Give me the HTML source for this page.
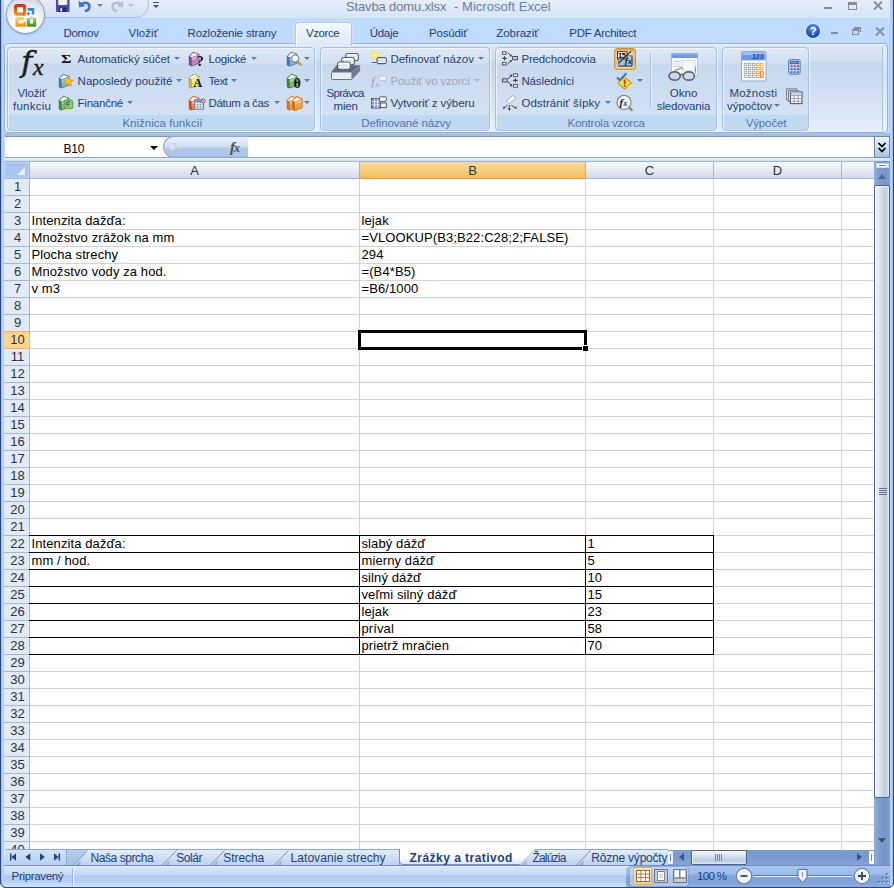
<!DOCTYPE html><html><head><meta charset="utf-8"><title>Stavba domu.xlsx - Microsoft Excel</title><style>

html,body{margin:0;padding:0}
body{width:894px;height:888px;position:relative;overflow:hidden;background:#bfdbff;font-family:"Liberation Sans",sans-serif;font-size:12px;color:#15428b}
.a{position:absolute}
.t{position:absolute;white-space:nowrap;font-family:"Liberation Sans",sans-serif}
.c{position:absolute;white-space:nowrap;font-family:"Liberation Sans",sans-serif;font-size:13px;line-height:16px;color:#000;letter-spacing:.1px}
.rh{position:absolute;left:4px;width:23px;padding-left:2px;text-align:center;font-family:"Liberation Sans",sans-serif;font-size:13px;line-height:16px;color:#2a3340;height:16px;background:#e2eaf6;border-bottom:1px solid #a5b6cf}
.ch{position:absolute;top:162px;height:16px;text-align:center;font-family:"Liberation Sans",sans-serif;font-size:13px;line-height:17px;color:#2a3340;background:linear-gradient(#f9fcfd,#d3dbe9);border-right:1px solid #9eb6ce;border-bottom:1px solid #9eb6ce;box-sizing:content-box}
.grp{position:absolute;top:47px;height:82px;border:1px solid #a3c0e3;border-radius:4px;background:linear-gradient(#dfe9f6 0px,#d3e0f1 15px,#c8d9ed 16px,#d3e2f3 67px,#c1d8f1 67px,#c3daf3 82px);box-shadow:1px 1px 0 rgba(255,255,255,.65), inset 1px 1px 0 rgba(255,255,255,.6)}
.dd{position:absolute;width:0;height:0;border-left:3px solid transparent;border-right:3px solid transparent;border-top:3px solid #567db1}
.stab{position:absolute;top:850px;height:15px}

</style></head><body>
<div class="a" style="left:0;top:0;width:894px;height:18px;background:linear-gradient(#e6eefa,#d5e4f7)"></div>
<div class="a" style="left:30px;top:-10px;width:117px;height:26px;border:1px solid #a4bfe2;border-radius:0 13px 13px 0;background:linear-gradient(#eef3fb,#d3e1f4)"></div>
<svg class="a" style="left:56px;top:0px" width="14" height="13" viewBox="0 0 14 13"><rect x="0" y="-2" width="13.5" height="14" rx="1" fill="#4b4aa8"/><rect x="2.2" y="-2" width="9" height="7" fill="#f4f6fb"/><rect x="3" y="7.4" width="7.4" height="4.6" fill="#2a2a6a"/><rect x="4.2" y="8.2" width="2" height="3.2" fill="#dfe3f2"/></svg>
<svg class="a" style="left:78px;top:0px" width="14" height="12" viewBox="0 0 14 12"><path d="M3.2 4.6c3.6 -3.4 8.6 -1.6 8.2 2.4c-.3 2.6 -2.6 3.8 -4.6 4" fill="none" stroke="#3f74d1" stroke-width="2.6"/><polygon points="0.6,0.4 1,7.4 7.4,6" fill="#3f74d1"/></svg>
<div class="dd" style="left:97px;top:4px;border-top-color:#6f7f96"></div>
<svg class="a" style="left:110px;top:0px" width="14" height="12" viewBox="0 0 14 12"><path d="M10.8 4.6c-3.6 -3.4 -8.6 -1.6 -8.2 2.4c.3 2.6 2.6 3.8 4.6 4" fill="none" stroke="#b4bfd0" stroke-width="2.6"/><polygon points="13.4,0.4 13,7.4 6.6,6" fill="#b4bfd0"/></svg>
<div class="dd" style="left:128px;top:4px;border-top-color:#b4bfd0"></div>
<div class="a" style="left:153px;top:2px;width:6px;height:1px;background:#3b4f74"></div>
<div class="dd" style="left:153px;top:5px;border-top-color:#3b4f74"></div>
<div class="a" style="left:7px;top:-4px;width:37px;height:37px;border-radius:50%;background:radial-gradient(circle at 50% 78%,#ffffff 0%,#fbfbfd 35%,#e6e9f0 60%,#cfd5e2 80%,#b9c1d3 100%);box-shadow:0 0 0 1px #97a3ba, 0 1px 3px rgba(60,80,120,.6)"></div>
<svg class="a" style="left:12px;top:2px" width="26" height="26" viewBox="0 0 26 26">
<defs><linearGradient id="o1" x1="0" y1="0" x2="0" y2="1"><stop offset="0" stop-color="#c9370c"/><stop offset="1" stop-color="#f0901e"/></linearGradient>
<linearGradient id="o2" x1="0" y1="0" x2="0" y2="1"><stop offset="0" stop-color="#f7d75a"/><stop offset="1" stop-color="#f49a12"/></linearGradient>
<linearGradient id="o3" x1="0" y1="0" x2="0" y2="1"><stop offset="0" stop-color="#9fcf6a"/><stop offset="1" stop-color="#4f9428"/></linearGradient></defs>
<rect x="3.6" y="3.6" width="9" height="8.6" rx="1.6" fill="none" stroke="url(#o1)" stroke-width="3.2"/>
<path d="M15.6 7.4h5.4v5.2" fill="none" stroke="#3f86cf" stroke-width="2.6"/><rect x="15" y="10.4" width="2.6" height="2.6" transform="rotate(45 16.3 11.7)" fill="#3f86cf"/>
<rect x="10.6" y="11" width="2.4" height="2.4" transform="rotate(45 11.8 12.2)" fill="#e06a1a"/>
<path d="M11.8 16.6h-6.800v6.600h7.600v-3.200" fill="none" stroke="url(#o2)" stroke-width="3.2"/>
<path d="M16.4 16v7.200h6.200v-7.200" fill="none" stroke="url(#o3)" stroke-width="3.2"/><rect x="18.2" y="14.600" width="2.6" height="2.6" fill="#b5db84"/>
</svg>
<div class="a" style="left:824px;top:7px;width:8px;height:2px;background:#858d9a"></div>
<div class="a" style="left:848px;top:2px;width:9px;height:8px;box-sizing:border-box;border:1px solid #858d9a;border-top-width:3px"></div>
<svg class="a" style="left:873px;top:1px" width="10" height="9" viewBox="0 0 10 9"><path d="M1 0.5l8 8M9 0.5l-8 8" stroke="#858d9a" stroke-width="1.900"/></svg>
<div class="a" style="left:806px;top:24px;width:14px;height:14px;border-radius:50%;background:radial-gradient(circle at 50% 30%,#6f9cf0,#1f4fc4 60%,#123a9c);box-shadow:0 0 0 1px #dfe9fb"></div>
<span class="a" style="left:806px;top:24px;width:14px;text-align:center;font:bold 11px/14px 'Liberation Sans',sans-serif;color:#fff">?</span>
<div class="a" style="left:831px;top:32px;width:7px;height:2px;background:#858d9a"></div>
<div class="a" style="left:854px;top:27px;width:7px;height:5px;box-sizing:border-box;border:1px solid #858d9a;border-top-width:2px"></div>
<div class="a" style="left:852px;top:29px;width:7px;height:6px;box-sizing:border-box;border:1px solid #858d9a;border-top-width:2px;background:#bfdbff"></div>
<svg class="a" style="left:875px;top:27px" width="10" height="9" viewBox="0 0 10 9"><path d="M1 0.5l8 8M9 0.5l-8 8" stroke="#858d9a" stroke-width="1.900"/></svg>
<div class="a" style="left:4px;top:43px;width:884px;height:90px;box-sizing:border-box;border:1px solid #8db2e3;border-radius:4px;background:linear-gradient(#dde7f5 0,#d1dff0 17px,#c6d7ec 18px,#cfdef1 45px,#e4effb 88px);box-shadow:inset 1px 1px 0 rgba(255,255,255,.6)"></div>
<div class="a" style="left:882px;top:47px;width:5px;height:84px;box-sizing:border-box;border-left:1px solid #a9c3e4;border-radius:0 3px 3px 0;background:linear-gradient(#e4eefa,#d3e2f4 30%,#eaf3fd)"></div>
<div class="a" style="left:295px;top:22px;width:55px;height:23px;border:1px solid #a9c6ec;border-bottom:none;border-radius:4px 4px 0 0;background:linear-gradient(#f4f8fe,#e6eef9 60%,#dfe9f6);box-shadow:inset 1px 1px 0 #fff,0 0 3px rgba(235,243,255,.9)"></div>
<div class="grp" style="left:7px;width:306px"></div>
<div class="grp" style="left:320px;width:168px"></div>
<div class="grp" style="left:495px;width:220px"></div>
<div class="grp" style="left:722px;width:85px"></div>
<div class="dd" style="left:174px;top:57px"></div>
<div class="dd" style="left:176px;top:79px"></div>
<div class="dd" style="left:127px;top:101px"></div>
<div class="dd" style="left:251px;top:57px"></div>
<div class="dd" style="left:231px;top:79px"></div>
<div class="dd" style="left:274px;top:101px"></div>
<div class="dd" style="left:304px;top:57px"></div>
<div class="dd" style="left:304px;top:79px"></div>
<div class="dd" style="left:304px;top:101px"></div>
<div class="dd" style="left:478px;top:57px"></div>
<div class="dd" style="left:605px;top:101px"></div>
<div class="dd" style="left:637px;top:79px"></div>
<div class="dd" style="left:774px;top:104px"></div>
<div class="dd" style="left:474px;top:79px;border-top-color:#a9b6c9"></div>
<span class="a" style="left:21.3px;top:47px;font-family:'DejaVu Serif','Liberation Serif',serif;font-style:italic;font-size:30px;line-height:1;color:#1c1c1c;-webkit-text-stroke:.5px #1c1c1c">f</span>
<span class="a" style="left:33px;top:55px;font-family:'Liberation Serif',serif;font-style:italic;font-size:24px;line-height:1;color:#1c1c1c;-webkit-text-stroke:.4px #1c1c1c">x</span>
<span class="a" style="left:60.5px;top:50px;font-family:'Liberation Serif',serif;font-weight:bold;font-size:13.5px;line-height:17px;color:#111;transform:scaleX(1.18);transform-origin:0 0">Σ</span>
<div class="a" style="left:650px;top:53px;width:1px;height:55px;background:#a9bfdd"></div><div class="a" style="left:651px;top:53px;width:1px;height:55px;background:#eaf1fa"></div>
<svg class="a" style="left:58px;top:73px" width="16" height="16" viewBox="0 0 16 16"><polygon points="0.8,5.2 5.2,0.7 11.4,3 11.4,12.5 3.4,15.5 0.8,13.9" fill="#2f6f9c"/><polygon points="1.5,5.4 5.3,1.6 10.7,3.5 3.5,6.3" fill="#c9e6f5"/><polygon points="2.6,5.5 5.4,2.6 9.6,4 3.8,6.1" fill="#fdfdf8"/><polygon points="1.5,5.9 3,6.600 3,14.600 1.5,13.600" fill="#3f86b4"/><polygon points="3.7,6.800 10.700,4.200 10.700,12 3.700,14.700" fill="#7db7d8"/><polygon points="3.7,6.800 10.700,4.200 10.700,6.500 3.700,9.400" fill="#c9e6f5" opacity=".6"/><polygon points="10.2,3.6 11.6,7 15.3,7.2 12.5,9.5 13.5,13 10.2,11 7,13 8,9.5 5.2,7.2 8.8,7" fill="#fbc21a" stroke="#e08a10" stroke-width=".7"/></svg>
<svg class="a" style="left:58px;top:95px" width="16" height="16" viewBox="0 0 16 16"><polygon points="0.8,5.2 5.2,0.7 11.4,3 11.4,12.5 3.4,15.5 0.8,13.9" fill="#2f7a38"/><polygon points="1.5,5.4 5.3,1.6 10.7,3.5 3.5,6.3" fill="#c9ecc5"/><polygon points="2.6,5.5 5.4,2.6 9.6,4 3.8,6.1" fill="#fdfdf8"/><polygon points="1.5,5.9 3,6.600 3,14.600 1.5,13.600" fill="#3f8f45"/><polygon points="3.7,6.800 10.700,4.200 10.700,12 3.700,14.700" fill="#7fbf7a"/><polygon points="3.7,6.800 10.700,4.200 10.700,6.500 3.700,9.400" fill="#c9ecc5" opacity=".6"/><rect x="6.2" y="5.2" width="8.6" height="8.4" rx="1.5" fill="#8fca86" stroke="#3f8f45" stroke-width=".8"/><path d="M12.3 7.2h-2.6a1.2 1.2 0 0 0 0 2.4h1.4" fill="none" stroke="#2f6f38" stroke-width="1.3"/><ellipse cx="9.8" cy="12.4" rx="2.6" ry="1" fill="#e8b93a" stroke="#a8791a" stroke-width=".5"/></svg>
<svg class="a" style="left:188px;top:51px" width="17" height="17" viewBox="0 0 17 17"><polygon points="0.8,5.2 5.2,0.7 11.4,3 11.4,12.5 3.4,15.5 0.8,13.9" fill="#74407f"/><polygon points="1.5,5.4 5.3,1.6 10.7,3.5 3.5,6.3" fill="#ebc9ee"/><polygon points="2.6,5.5 5.4,2.6 9.6,4 3.8,6.1" fill="#fdfdf8"/><polygon points="1.5,5.9 3,6.600 3,14.600 1.5,13.600" fill="#8a4a96"/><polygon points="3.7,6.800 10.700,4.200 10.700,12 3.700,14.700" fill="#c084c4"/><polygon points="3.7,6.800 10.700,4.200 10.700,6.500 3.700,9.400" fill="#ebc9ee" opacity=".6"/><text x="12" y="15.300" font-family="Liberation Serif,serif" font-weight="bold" font-size="14.500" text-anchor="middle" fill="#111">?</text></svg>
<svg class="a" style="left:188px;top:73px" width="16" height="16" viewBox="0 0 16 16"><polygon points="0.8,5.2 5.2,0.7 11.4,3 11.4,12.5 3.4,15.5 0.8,13.9" fill="#a8962a"/><polygon points="1.5,5.4 5.3,1.6 10.7,3.5 3.5,6.3" fill="#fdf8c3"/><polygon points="2.6,5.5 5.4,2.6 9.6,4 3.8,6.1" fill="#fdfdf8"/><polygon points="1.5,5.9 3,6.600 3,14.600 1.5,13.600" fill="#cdb93a"/><polygon points="3.7,6.800 10.700,4.200 10.700,12 3.700,14.700" fill="#f3e36e"/><polygon points="3.7,6.800 10.700,4.200 10.700,6.500 3.700,9.400" fill="#fdf8c3" opacity=".6"/><text x="9.700" y="13.900" font-family="Liberation Serif,serif" font-weight="bold" font-size="12.500" text-anchor="middle" fill="#111">A</text></svg>
<svg class="a" style="left:188px;top:95px" width="18" height="16" viewBox="0 0 18 16"><polygon points="0.8,5.2 5.2,0.7 11.4,3 11.4,12.5 3.4,15.5 0.8,13.9" fill="#b8481a"/><polygon points="1.5,5.4 5.3,1.6 10.7,3.5 3.5,6.3" fill="#fbd0b4"/><polygon points="2.6,5.5 5.4,2.6 9.6,4 3.8,6.1" fill="#fdfdf8"/><polygon points="1.5,5.9 3,6.600 3,14.600 1.5,13.600" fill="#cf5420"/><polygon points="3.7,6.800 10.700,4.200 10.700,12 3.700,14.700" fill="#f08a52"/><polygon points="3.7,6.800 10.700,4.200 10.700,6.500 3.700,9.400" fill="#fbd0b4" opacity=".6"/><rect x="6.800" y="4.800" width="8.800" height="9.400" fill="#f4f6fb" stroke="#5a6f9c" stroke-width=".9"/><rect x="7.200" y="5.200" width="8" height="2.400" fill="#6f8fc9"/><path d="M7.300 9.800h7.800M7.300 12h7.800M9.600 7.600v6.400M12.400 7.600v6.400" stroke="#8a97b8" stroke-width=".7"/><circle cx="15.200" cy="5.800" r="2" fill="#fff" stroke="#5a3a3a" stroke-width=".8"/><circle cx="15.200" cy="5.800" r=".8" fill="#c33"/></svg>
<svg class="a" style="left:286px;top:51px" width="16" height="16" viewBox="0 0 16 16"><polygon points="0.8,5.2 5.2,0.7 11.4,3 11.4,12.5 3.4,15.5 0.8,13.9" fill="#3b689f"/><polygon points="1.5,5.4 5.3,1.6 10.7,3.5 3.5,6.3" fill="#d0e1f4"/><polygon points="2.6,5.5 5.4,2.6 9.6,4 3.8,6.1" fill="#fdfdf8"/><polygon points="1.5,5.9 3,6.600 3,14.600 1.5,13.600" fill="#4a78b4"/><polygon points="3.7,6.800 10.700,4.200 10.700,12 3.700,14.700" fill="#86add8"/><polygon points="3.7,6.800 10.700,4.200 10.700,6.500 3.700,9.400" fill="#d0e1f4" opacity=".6"/><circle cx="9.2" cy="7.6" r="3.6" fill="#eef5fc" stroke="#7f8ea3" stroke-width="1.2"/><path d="M11.8 10.4l3 3.4" stroke="#c8904a" stroke-width="2.2" stroke-linecap="round"/></svg>
<svg class="a" style="left:286px;top:73px" width="16" height="16" viewBox="0 0 16 16"><polygon points="0.8,5.2 5.2,0.7 11.4,3 11.4,12.5 3.4,15.5 0.8,13.9" fill="#2f7538"/><polygon points="1.5,5.4 5.3,1.6 10.7,3.5 3.5,6.3" fill="#c9e9c4"/><polygon points="2.6,5.5 5.4,2.6 9.6,4 3.8,6.1" fill="#fdfdf8"/><polygon points="1.5,5.9 3,6.600 3,14.600 1.5,13.600" fill="#3f8a45"/><polygon points="3.7,6.800 10.700,4.200 10.700,12 3.700,14.700" fill="#7fba78"/><polygon points="3.7,6.800 10.700,4.200 10.700,6.500 3.700,9.400" fill="#c9e9c4" opacity=".6"/><text x="11.2" y="14.6" font-family="Liberation Serif,serif" font-weight="bold" font-size="14" text-anchor="middle" fill="#111">θ</text></svg>
<svg class="a" style="left:286px;top:95px" width="17" height="16" viewBox="0 0 17 16"><polygon points="0.8,5.2 5.2,0.7 11.4,3 11.4,12.5 3.4,15.5 0.8,13.9" fill="#c46a15"/><polygon points="1.5,5.4 5.3,1.6 10.7,3.5 3.5,6.3" fill="#fcd7a8"/><polygon points="2.6,5.5 5.4,2.6 9.6,4 3.8,6.1" fill="#fdfdf8"/><polygon points="1.5,5.9 3,6.600 3,14.600 1.5,13.600" fill="#d9761a"/><polygon points="3.7,6.800 10.700,4.200 10.700,12 3.700,14.700" fill="#f6a04a"/><polygon points="3.7,6.800 10.700,4.200 10.700,6.500 3.700,9.400" fill="#fcd7a8" opacity=".6"/><g transform="translate(5.2,0.4)"><polygon points="0.8,5.2 5.2,0.7 11.4,3 11.4,12.5 3.4,15.5 0.8,13.9" fill="#c46a15"/><polygon points="1.5,5.4 5.3,1.6 10.7,3.5 3.5,6.3" fill="#fcd7a8"/><polygon points="2.6,5.5 5.4,2.6 9.6,4 3.8,6.1" fill="#fdfdf8"/><polygon points="1.5,5.9 3,6.600 3,14.600 1.5,13.600" fill="#d9761a"/><polygon points="3.7,6.800 10.700,4.200 10.700,12 3.700,14.700" fill="#f6a04a"/><polygon points="3.7,6.800 10.700,4.200 10.700,6.500 3.700,9.400" fill="#fcd7a8" opacity=".6"/></g></svg>
<svg class="a" style="left:331px;top:52px" width="31" height="29" viewBox="0 0 31 29"><polygon points="0.3,20 5.7,13.2 29.1,13.2 21,20" fill="#5f6b80"/><polygon points="21,20 29.1,13.2 29.1,19 21,27.5" fill="#717d92"/><rect x="14.7" y="1.5" width="12.6" height="7.2" rx="2" fill="#fbfcfe" stroke="#4f5a70" stroke-width="1.100"/><path d="M17.9 4.3h7M17.9 6.3h7" stroke="#c5cad6" stroke-width=".8"/><circle cx="16.5" cy="5.1" r=".6" fill="#6a758c"/><rect x="10.7" y="5.5" width="12.6" height="7.2" rx="2" fill="#fbfcfe" stroke="#4f5a70" stroke-width="1.100"/><path d="M13.899999999999999 8.3h7M13.899999999999999 10.3h7" stroke="#c5cad6" stroke-width=".8"/><circle cx="12.5" cy="9.1" r=".6" fill="#6a758c"/><rect x="6.6" y="10" width="12.6" height="7.2" rx="2" fill="#fbfcfe" stroke="#4f5a70" stroke-width="1.100"/><path d="M9.8 12.8h7M9.8 14.8h7" stroke="#c5cad6" stroke-width=".8"/><circle cx="8.4" cy="13.6" r=".6" fill="#6a758c"/><rect x="0.5" y="20" width="20.5" height="7.5" rx="1" fill="#e9edf6" stroke="#6a758c" stroke-width="1"/><polygon points="1,20 6,13.700 7,13.700 7,17 19,17.500 21,20" fill="#5f6b80" opacity="0"/></svg>
<svg class="a" style="left:371px;top:51px" width="16" height="14" viewBox="0 0 16 14"><rect x="0.8" y="0.8" width="6.6" height="6.6" fill="#ffe23a"/><path d="M4.1 0.5v7.4M0.4 4.1h7.4M1.4 1.4l5.4 5.4M6.8 1.4L1.4 6.8" stroke="#fff7b0" stroke-width=".8"/><path d="M0.6 11.5h5" stroke="#5f6b80" stroke-width="1"/><rect x="6" y="6.6" width="9.4" height="6" rx="1.8" fill="#fbfcfe" stroke="#4f5a70" stroke-width="1.1"/><path d="M9 8.8h5M9 10.6h5" stroke="#b9c0ce" stroke-width=".8"/><circle cx="7.7" cy="9.6" r=".6" fill="#4f5a70"/></svg>
<svg class="a" style="left:371px;top:74px" width="16" height="14" viewBox="0 0 16 14"><text x="0" y="12" font-family="Liberation Serif,serif" font-style="italic" font-size="13" fill="#9aa3b2">f</text><text x="4.6" y="12.6" font-family="Liberation Serif,serif" font-style="italic" font-size="9" fill="#9aa3b2">x</text><rect x="8" y="1.8" width="7.4" height="5" rx="1.5" fill="#eef1f7" stroke="#b4bccb" stroke-width="1"/></svg>
<svg class="a" style="left:371px;top:96px" width="16" height="13" viewBox="0 0 16 13"><rect x="0.5" y="2.5" width="9" height="9.5" fill="#8b93c9" stroke="#4a5388" stroke-width="1"/><path d="M0.5 5.6h9M0.5 8.8h9M3.6 2.5v9.5M6.6 2.5v9.5" stroke="#e8ebf8" stroke-width=".9"/><rect x="8.4" y="0.8" width="7" height="4.6" rx="1.4" fill="#fbfcfe" stroke="#4f5a70" stroke-width="1"/><rect x="9.6" y="7" width="5.8" height="4.6" fill="#fbfcfe" stroke="#4f5a70" stroke-width="1"/></svg>
<svg class="a" style="left:502px;top:51px" width="16" height="15" viewBox="0 0 16 15"><rect x="0.5" y="0.8" width="3.6" height="2.4" fill="#fff" stroke="#3c4250" stroke-width=".9"/><rect x="0.5" y="11.6" width="3.6" height="2.4" fill="#fff" stroke="#3c4250" stroke-width=".9"/><path d="M0.3 7.4h4.4M2.5 5.2v4.4" stroke="#3c4250" stroke-width="1.1"/><path d="M5.6 1.6l3.6 3.4M5.6 13l3.6 -3.4" stroke="#3c4250" stroke-width="1"/><path d="M9.8 5.6l-2.6 -.4 2.2 -2.2zM9.8 9l-2.6 .4 2.2 2.2z" fill="#3c4250"/><rect x="10.6" y="5.6" width="4.8" height="3.2" fill="#c9ccd3" stroke="#3c4250" stroke-width=".9"/></svg>
<svg class="a" style="left:502px;top:73px" width="16" height="15" viewBox="0 0 16 15"><rect x="0.5" y="5.8" width="4.8" height="3.2" fill="#c9ccd3" stroke="#3c4250" stroke-width=".9"/><path d="M5.8 6l4 -3.8M5.8 8.8l4 3.8" stroke="#3c4250" stroke-width="1"/><path d="M10.4 1.4l-2.8 .4 2.2 2.2zM10.4 13.4l-2.8 -.4 2.2 -2.2z" fill="#3c4250"/><rect x="11.6" y="0.8" width="3.8" height="2.6" fill="#fff" stroke="#3c4250" stroke-width=".9"/><rect x="11.6" y="11.6" width="3.8" height="2.6" fill="#fff" stroke="#3c4250" stroke-width=".9"/><path d="M11.2 7.4h4.4M13.4 5.2v4.4" stroke="#3c4250" stroke-width="1.1"/></svg>
<svg class="a" style="left:502px;top:94px" width="17" height="18" viewBox="0 0 17 18"><polygon points="4.4,7 10.8,1.4 14,3.8 7.6,9.6" fill="#fbfcfe" stroke="#9aa0ad" stroke-width=".9"/><polygon points="4.4,7 7.6,9.6 6.8,10.400 3.800,7.800" fill="#cfd3dc"/><path d="M7.300 11v4.600M5.300 11.200l-3.400 2.800M9.300 11.200l4.400 2.800" stroke="#3c4250" stroke-width="1"/><path d="M7.300 17l-1.600 -2.600h3.200zM0.800 14.800l.9 -2.600 1.700 2zM15 14.800l-.9 -2.600 -1.700 2z" fill="#3c4250"/></svg>
<div class="a" style="left:614px;top:48px;width:22px;height:22px;box-sizing:border-box;border:1px solid #c2934f;border-radius:3px;background:linear-gradient(#f7c27a,#fbd6a0 45%,#f9b95e 50%,#fbcf8a);box-shadow:inset 0 1px 2px rgba(150,90,20,.45)"></div>
<svg class="a" style="left:617px;top:51px" width="16" height="16" viewBox="0 0 16 16"><rect x="1.500" y="4.700" width="13.500" height="10.300" fill="#a9c3e6" stroke="#5f7fb0" stroke-width=".8"/><path d="M15 4.700v10.300h-13.500" fill="none" stroke="#2c4670" stroke-width="1"/><rect x="0.500" y="0.700" width="9.500" height="7.200" fill="#fff" stroke="#333" stroke-width="1"/><text x="1.100" y="7" font-family="Liberation Sans,sans-serif" font-weight="bold" font-size="7.500" fill="#000" letter-spacing="-.6">15</text><text x="7.800" y="12.800" font-family="Liberation Serif,serif" font-style="italic" font-weight="bold" font-size="8.500" fill="#111">fx</text><path d="M14.200 0.200L1.500 12.400" stroke="#222" stroke-width="1.100"/></svg>
<svg class="a" style="left:616px;top:72px" width="17" height="18" viewBox="0 0 17 18"><polygon points="8.6,4.6 15.4,11 8.6,17.4 1.8,11" fill="#fbd21f" stroke="#b98a10" stroke-width="1"/><polygon points="8.6,6.4 13.4,11 8.6,15.6 3.8,11" fill="#fde25a"/><path d="M8.6 7.6v4.6" stroke="#d92a1a" stroke-width="1.8"/><circle cx="8.6" cy="14" r="1" fill="#d92a1a"/><path d="M1 5.6l2.8 2.6 6.6 -7" fill="none" stroke="#3f74c4" stroke-width="2"/></svg>
<svg class="a" style="left:616px;top:94px" width="18" height="18" viewBox="0 0 18 18"><path d="M12.6 12.8l3 3" stroke="#a8864a" stroke-width="2.6" stroke-linecap="round"/><circle cx="8" cy="8.4" r="7" fill="#e9f0fa" stroke="#7d8ba3" stroke-width="1.3"/><circle cx="8" cy="8.4" r="5.6" fill="none" stroke="#fff" stroke-width=".8" opacity=".8"/><text x="3.4" y="12" font-family="Liberation Serif,serif" font-style="italic" font-weight="bold" font-size="11" fill="#222">f</text><text x="7.6" y="12.2" font-family="Liberation Serif,serif" font-style="italic" font-weight="bold" font-size="7.5" fill="#222">x</text></svg>
<svg class="a" style="left:668px;top:52px" width="31" height="30" viewBox="0 0 31 30"><rect x="3.5" y="1.5" width="26" height="22" fill="#fdfdfe" stroke="#b7c3d8" stroke-width="1"/><rect x="3.5" y="1.5" width="26" height="4.5" fill="#6d9be3"/><rect x="3.5" y="1.5" width="26" height="1.4" fill="#8db4ee"/><path d="M6 9.5h6.5M6 12h6.5M6 14.5h6.5M6 17h6.5" stroke="#b9c2d2" stroke-width=".9"/><rect x="14" y="8.5" width="13" height="10.5" fill="#f3f6fb" stroke="#c9d1df" stroke-width=".8"/><path d="M4.5 20.5l8.5 -5 2.5 1.5M27.5 14.5v7" fill="none" stroke="#8a94a6" stroke-width="1.1"/><ellipse cx="6.6" cy="24" rx="5.6" ry="4.2" fill="#cfd8e6" fill-opacity=".9" stroke="#5f6a7e" stroke-width="1.7"/><ellipse cx="20.8" cy="24" rx="5.6" ry="4.2" fill="#cfd8e6" fill-opacity=".9" stroke="#5f6a7e" stroke-width="1.7"/><path d="M12 23.2q1.7 -1.8 3.400 0" fill="none" stroke="#5f6a7e" stroke-width="1.5"/></svg>
<svg class="a" style="left:741px;top:51px" width="26" height="31" viewBox="0 0 26 31"><rect x="0.5" y="0.5" width="24.5" height="29.5" rx="1" fill="#fdfdfe" stroke="#8fa6cc" stroke-width="1"/><rect x="1" y="1" width="23.5" height="8.4" fill="#6e9be6"/><rect x="1" y="1" width="23.5" height="3" fill="#9cc0f4"/><text x="22.6" y="8.2" font-family="Liberation Sans,sans-serif" font-style="italic" font-weight="bold" font-size="7" text-anchor="end" fill="#1f4fa8">123</text><rect x="3.2" y="12.4" width="2.6" height="2.4" fill="#fff" stroke="#9aa0a8" stroke-width=".8"/><rect x="7.3" y="12.4" width="2.6" height="2.4" fill="#fff" stroke="#9aa0a8" stroke-width=".8"/><rect x="11.4" y="12.4" width="2.6" height="2.4" fill="#fff" stroke="#9aa0a8" stroke-width=".8"/><rect x="15.5" y="12.4" width="2.6" height="2.4" fill="#fff" stroke="#e9a23a" stroke-width=".8"/><rect x="19.6" y="12.4" width="2.6" height="2.4" fill="#fff" stroke="#e9a23a" stroke-width=".8"/><rect x="3.2" y="16.3" width="2.6" height="2.4" fill="#fff" stroke="#9aa0a8" stroke-width=".8"/><rect x="7.3" y="16.3" width="2.6" height="2.4" fill="#fff" stroke="#9aa0a8" stroke-width=".8"/><rect x="11.4" y="16.3" width="2.6" height="2.4" fill="#fff" stroke="#9aa0a8" stroke-width=".8"/><rect x="15.5" y="16.3" width="2.6" height="2.4" fill="#fff" stroke="#e9a23a" stroke-width=".8"/><rect x="19.6" y="16.3" width="2.6" height="2.4" fill="#fff" stroke="#e9a23a" stroke-width=".8"/><rect x="3.2" y="20.2" width="2.6" height="2.4" fill="#fff" stroke="#9aa0a8" stroke-width=".8"/><rect x="7.3" y="20.2" width="2.6" height="2.4" fill="#fff" stroke="#9aa0a8" stroke-width=".8"/><rect x="11.4" y="20.2" width="2.6" height="2.4" fill="#fff" stroke="#9aa0a8" stroke-width=".8"/><rect x="15.5" y="20.2" width="2.6" height="2.4" fill="#fff" stroke="#e9a23a" stroke-width=".8"/><rect x="3.2" y="24.1" width="2.6" height="2.4" fill="#fff" stroke="#9aa0a8" stroke-width=".8"/><rect x="7.3" y="24.1" width="2.6" height="2.4" fill="#fff" stroke="#9aa0a8" stroke-width=".8"/><rect x="11.4" y="24.1" width="2.6" height="2.4" fill="#fff" stroke="#9aa0a8" stroke-width=".8"/><rect x="15.5" y="24.1" width="2.6" height="2.4" fill="#fff" stroke="#e9a23a" stroke-width=".8"/><rect x="19.6" y="20.2" width="2.6" height="6.2" fill="#fbd7b0" stroke="#e06a2a" stroke-width=".8"/></svg>
<svg class="a" style="left:788px;top:59px" width="13" height="16" viewBox="0 0 13 16"><rect x="0.6" y="0.6" width="11.6" height="14.6" rx="1.6" fill="#b7cbea" stroke="#5f7fb8" stroke-width="1"/><rect x="2" y="2" width="8.8" height="3" fill="#3f68b4"/><path d="M3 3.4h6" stroke="#9ec0f0" stroke-width=".8"/><rect x="2.6" y="6.4" width="1.8" height="1.6" fill="#c0392b"/><rect x="5.8" y="6.4" width="1.8" height="1.6" fill="#c0392b"/><rect x="9.0" y="6.4" width="1.8" height="1.6" fill="#c0392b"/><rect x="2.6" y="9.4" width="1.8" height="1.6" fill="#3b5fa8"/><rect x="5.8" y="9.4" width="1.8" height="1.6" fill="#3b5fa8"/><rect x="9.0" y="9.4" width="1.8" height="1.6" fill="#3b5fa8"/><rect x="2.6" y="12.4" width="1.8" height="1.6" fill="#3b5fa8"/><rect x="5.8" y="12.4" width="1.8" height="1.6" fill="#3b5fa8"/><rect x="9.0" y="12.4" width="1.8" height="1.6" fill="#3b5fa8"/></svg>
<svg class="a" style="left:786px;top:88px" width="17" height="17" viewBox="0 0 17 17"><rect x="0.6" y="0.8" width="10" height="11" fill="#dfe6f2" stroke="#6a7488" stroke-width=".9"/><rect x="2.4" y="2.4" width="10" height="11" fill="#e9eef7" stroke="#6a7488" stroke-width=".9"/><rect x="4.4" y="4" width="11.6" height="11.6" fill="#fff" stroke="#4f586b" stroke-width="1.1"/><path d="M4.4 7.6h11.6M4.4 10.4h11.6M4.4 13.2h11.6M8.2 4v11.6M12.2 4v11.6" stroke="#8e98ac" stroke-width=".9"/><rect x="4.9" y="4.5" width="10.6" height="2.6" fill="#c9d3e6"/></svg>
<div class="a" style="left:4px;top:133px;width:886px;height:29px;background:linear-gradient(#a9c4e6 0,#a1bde2 3px,#c3d8f2 4px,#c3d8f2 24px,#e6effb 25px,#dbe8f8 27px,#b9d0ee 29px)"></div>
<div class="a" style="left:5px;top:136px;width:165px;height:22px;background:#fff;border-top:1px solid #7c93b6;border-bottom:1px solid #8ea5c6;box-sizing:border-box"></div>
<div class="a" style="left:247px;top:136px;width:628px;height:22px;background:#fff;border:1px solid #8ea5c6;border-top-color:#7c93b6;box-sizing:border-box"></div>
<div class="a" style="left:163px;top:136px;width:85px;height:22px;border-radius:11px 0 0 11px;background:linear-gradient(#e9f1fb,#cfdff3 50%,#b3caea 55%,#a9c3e7);border:1px solid #8aa5cf;border-right:none;box-sizing:border-box"></div>
<div class="a" style="left:169px;top:143px;width:8px;height:8px;border-radius:50%;background:radial-gradient(circle at 40% 40%,#f3ecf1,#b4bacd)"></div>
<div class="a" style="left:150px;top:146px;width:0;height:0;border-left:4px solid transparent;border-right:4px solid transparent;border-top:4px solid #000"></div>
<span class="a" style="left:230px;top:138px;font-family:'Liberation Serif',serif;font-style:italic;font-weight:bold;font-size:15px;line-height:18px;color:#4a4f5a;letter-spacing:-1px">f<span style="font-size:12px">x</span></span>
<div class="a" style="left:874px;top:136px;width:16px;height:22px;border:1px solid #6f86a8;box-sizing:border-box;background:linear-gradient(#eaf1fb,#d3e1f4 45%,#a9c1e4)"></div>
<svg class="a" style="left:877px;top:142px" width="10" height="12" viewBox="0 0 10 12"><path d="M1.5 1l3.5 3.5L8.500 1M1.500 6l3.5 3.5L8.500 6" fill="none" stroke="#000" stroke-width="1.7"/></svg>
<div class="a" style="left:5px;top:161px;width:870px;height:689px;background:#fff"></div>
<div class="a" style="left:5px;top:161px;width:870px;height:1px;background:#9eb6ce"></div>
<div class="a" style="left:30px;top:179px;width:845px;height:671px;background:repeating-linear-gradient(#fff 0,#fff 16px,#d0d3de 16px,#d0d3de 17px)"></div>
<div class="a" style="left:359px;top:179px;width:1px;height:671px;background:#d0d3de"></div>
<div class="a" style="left:585px;top:179px;width:1px;height:671px;background:#d0d3de"></div>
<div class="a" style="left:713px;top:179px;width:1px;height:671px;background:#d0d3de"></div>
<div class="a" style="left:841px;top:179px;width:1px;height:671px;background:#d0d3de"></div>
<div class="a" style="left:4px;top:162px;width:25px;height:16px;background:#a9c4ee;box-shadow:inset 1px 1px 0 #bcd2f3,inset -1px -1px 0 #bcd2f3;border-right:1px solid #9eb6ce;border-bottom:1px solid #9eb6ce"></div>
<div class="a" style="left:17px;top:167px;width:0;height:0;border-left:8px solid transparent;border-bottom:8px solid #e6eefa"></div>
<div class="ch" style="left:30px;width:329px;">A</div>
<div class="ch" style="left:360px;width:225px;background:linear-gradient(#f9d99f,#f1c15f);border-bottom-color:#f29536;">B</div>
<div class="ch" style="left:586px;width:127px;">C</div>
<div class="ch" style="left:714px;width:127px;">D</div>
<div class="ch" style="left:842px;width:32px;"></div>
<div class="rh" style="top:179px;">1</div>
<div class="rh" style="top:196px;">2</div>
<div class="rh" style="top:213px;">3</div>
<div class="rh" style="top:230px;">4</div>
<div class="rh" style="top:247px;">5</div>
<div class="rh" style="top:264px;">6</div>
<div class="rh" style="top:281px;">7</div>
<div class="rh" style="top:298px;">8</div>
<div class="rh" style="top:315px;">9</div>
<div class="rh" style="top:332px;background:#ffd58d;border-bottom-color:#eeb06a;box-shadow:0 -1px 0 #eeb06a;">10</div>
<div class="rh" style="top:349px;">11</div>
<div class="rh" style="top:366px;">12</div>
<div class="rh" style="top:383px;">13</div>
<div class="rh" style="top:400px;">14</div>
<div class="rh" style="top:417px;">15</div>
<div class="rh" style="top:434px;">16</div>
<div class="rh" style="top:451px;">17</div>
<div class="rh" style="top:468px;">18</div>
<div class="rh" style="top:485px;">19</div>
<div class="rh" style="top:502px;">20</div>
<div class="rh" style="top:519px;">21</div>
<div class="rh" style="top:536px;">22</div>
<div class="rh" style="top:553px;">23</div>
<div class="rh" style="top:570px;">24</div>
<div class="rh" style="top:587px;">25</div>
<div class="rh" style="top:604px;">26</div>
<div class="rh" style="top:621px;">27</div>
<div class="rh" style="top:638px;">28</div>
<div class="rh" style="top:655px;">29</div>
<div class="rh" style="top:672px;">30</div>
<div class="rh" style="top:689px;">31</div>
<div class="rh" style="top:706px;">32</div>
<div class="rh" style="top:723px;">33</div>
<div class="rh" style="top:740px;">34</div>
<div class="rh" style="top:757px;">35</div>
<div class="rh" style="top:774px;">36</div>
<div class="rh" style="top:791px;">37</div>
<div class="rh" style="top:808px;">38</div>
<div class="rh" style="top:825px;">39</div>
<div class="rh" style="top:842px;">40</div>
<div class="a" style="left:29px;top:179px;width:1px;height:671px;background:#9eb6ce"></div>
<div class="a" style="left:29px;top:332px;width:1px;height:17px;background:#f0b878"></div>
<span class="c" style="left:31.5px;top:213px">Intenzita dažďa:</span>
<span class="c" style="left:361.5px;top:213px">lejak</span>
<span class="c" style="left:31.5px;top:230px">Množstvo zrážok na mm</span>
<span class="c" style="left:361.5px;top:230px">=VLOOKUP(B3;B22:C28;2;FALSE)</span>
<span class="c" style="left:31.5px;top:247px">Plocha strechy</span>
<span class="c" style="left:361.5px;top:247px">294</span>
<span class="c" style="left:31.5px;top:264px">Množstvo vody za hod.</span>
<span class="c" style="left:361.5px;top:264px">=(B4*B5)</span>
<span class="c" style="left:31.5px;top:281px">v m3</span>
<span class="c" style="left:361.5px;top:281px">=B6/1000</span>
<span class="c" style="left:31.5px;top:536px">Intenzita dažďa:</span>
<span class="c" style="left:31.5px;top:553px">mm / hod.</span>
<span class="c" style="left:361.5px;top:536px">slabý dážď</span>
<span class="c" style="left:587.5px;top:536px">1</span>
<span class="c" style="left:361.5px;top:553px">mierny dážď</span>
<span class="c" style="left:587.5px;top:553px">5</span>
<span class="c" style="left:361.5px;top:570px">silný dážď</span>
<span class="c" style="left:587.5px;top:570px">10</span>
<span class="c" style="left:361.5px;top:587px">veľmi silný dážď</span>
<span class="c" style="left:587.5px;top:587px">15</span>
<span class="c" style="left:361.5px;top:604px">lejak</span>
<span class="c" style="left:587.5px;top:604px">23</span>
<span class="c" style="left:361.5px;top:621px">príval</span>
<span class="c" style="left:587.5px;top:621px">58</span>
<span class="c" style="left:361.5px;top:638px">prietrž mračien</span>
<span class="c" style="left:587.5px;top:638px">70</span>
<div class="a" style="left:29px;top:535px;width:685px;height:1px;background:#000"></div>
<div class="a" style="left:29px;top:552px;width:685px;height:1px;background:#000"></div>
<div class="a" style="left:29px;top:569px;width:685px;height:1px;background:#000"></div>
<div class="a" style="left:29px;top:586px;width:685px;height:1px;background:#000"></div>
<div class="a" style="left:29px;top:603px;width:685px;height:1px;background:#000"></div>
<div class="a" style="left:29px;top:620px;width:685px;height:1px;background:#000"></div>
<div class="a" style="left:29px;top:637px;width:685px;height:1px;background:#000"></div>
<div class="a" style="left:29px;top:654px;width:685px;height:1px;background:#000"></div>
<div class="a" style="left:359px;top:535px;width:1px;height:120px;background:#000"></div>
<div class="a" style="left:585px;top:535px;width:1px;height:120px;background:#000"></div>
<div class="a" style="left:713px;top:535px;width:1px;height:120px;background:#000"></div>
<div class="a" style="left:358px;top:330px;width:229px;height:20px;border:3px solid #000;box-sizing:border-box"></div>
<div class="a" style="left:582px;top:345px;width:6px;height:6px;background:#000;border:1px solid #fff;border-right:0;border-bottom:0;box-sizing:border-box"></div>
<div class="a" style="left:587px;top:346px;width:1px;height:5px;background:#000"></div><div class="a" style="left:583px;top:350px;width:5px;height:1px;background:#000"></div>
<div class="a" style="left:874px;top:161px;width:16px;height:704px;background:linear-gradient(90deg,#92aedb,#7e9ed0 30%,#7495c8 70%,#7f9fd1)"></div>
<div class="a" style="left:876px;top:163px;width:13px;height:5px;box-sizing:border-box;background:#fff;border:1px solid #c9d7ee"></div><div class="a" style="left:879px;top:165px;width:7px;height:1px;background:#6f86ad"></div>
<div class="a" style="left:878px;top:174px;width:0;height:0;border-left:4.500px solid transparent;border-right:4.500px solid transparent;border-bottom:5px solid #50688f"></div>
<div class="a" style="left:878px;top:838px;width:0;height:0;border-left:4.500px solid transparent;border-right:4.500px solid transparent;border-top:5px solid #3b5580"></div>
<div class="a" style="left:874px;top:185px;width:16px;height:613px;border:1px solid #4f5f98;border-radius:2px;box-sizing:border-box;background:linear-gradient(90deg,#f2f5fa,#e1e8f3 30%,#c6d3e8 60%,#bccce4 80%,#e3ebf6);box-shadow:inset 1px 1px 0 rgba(255,255,255,.7)"></div>
<div class="a" style="left:879px;top:488px;width:8px;height:1px;background:#66758f"></div>
<div class="a" style="left:879px;top:490px;width:8px;height:1px;background:#66758f"></div>
<div class="a" style="left:879px;top:492px;width:8px;height:1px;background:#66758f"></div>
<div class="a" style="left:879px;top:494px;width:8px;height:1px;background:#66758f"></div>
<div class="a" style="left:5px;top:850px;width:870px;height:15px;background:linear-gradient(#b7cdee,#a5bfe6)"></div>
<div class="a" style="left:5px;top:849px;width:663px;height:1px;background:#8ba6d2"></div>
<div class="a" style="left:5px;top:850px;width:61px;height:15px;background:linear-gradient(#d3e2f6,#b9cff0)"></div><div class="a" style="left:66px;top:850px;width:1px;height:15px;background:#8ba6d2"></div>
<svg class="a" style="left:9px;top:853px" width="54" height="8" viewBox="0 0 54 8"><rect x="1" y="0.500" width="1.500" height="7" fill="#1c3f86"/><polygon points="7,0.300 7,7.700 2.600,4" fill="#1c3f86"/><polygon points="21.300,0.300 21.300,7.700 16.500,4" fill="#1c3f86"/><polygon points="31,0.300 31,7.700 35.800,4" fill="#1c3f86"/><polygon points="45,0.300 45,7.700 49.500,4" fill="#1c3f86"/><rect x="49.600" y="0.500" width="1.500" height="7" fill="#1c3f86"/></svg>
<svg class="a" style="left:73px;top:850px" width="104.5" height="15" viewBox="0 0 104.5 15"><defs><linearGradient id="tg1" x1="0" y1="0" x2="0" y2="1"><stop offset="0" stop-color="#e3edfa"/><stop offset=".5" stop-color="#cfdef4"/><stop offset="1" stop-color="#bdd1ef"/></linearGradient></defs><polygon points="0,15 14,0 104.5,0 104.5,15" fill="url(#tg1)"/><path d="M0.5 15L14.5 0.500" stroke="#7f8fa9" stroke-width="1" fill="none"/><polygon points="3,15 7.5,10.500 7.5,15" fill="#8ba6d2" opacity=".8"/></svg>
<svg class="a" style="left:161.5px;top:850px" width="64.0" height="15" viewBox="0 0 64.0 15"><defs><linearGradient id="tg2" x1="0" y1="0" x2="0" y2="1"><stop offset="0" stop-color="#e3edfa"/><stop offset=".5" stop-color="#cfdef4"/><stop offset="1" stop-color="#bdd1ef"/></linearGradient></defs><polygon points="0,15 14,0 64.0,0 64.0,15" fill="url(#tg2)"/><path d="M0.5 15L14.5 0.500" stroke="#7f8fa9" stroke-width="1" fill="none"/><polygon points="3,15 7.5,10.500 7.5,15" fill="#8ba6d2" opacity=".8"/></svg>
<svg class="a" style="left:209.5px;top:850px" width="80.0" height="15" viewBox="0 0 80.0 15"><defs><linearGradient id="tg3" x1="0" y1="0" x2="0" y2="1"><stop offset="0" stop-color="#e3edfa"/><stop offset=".5" stop-color="#cfdef4"/><stop offset="1" stop-color="#bdd1ef"/></linearGradient></defs><polygon points="0,15 14,0 80.0,0 80.0,15" fill="url(#tg3)"/><path d="M0.5 15L14.5 0.500" stroke="#7f8fa9" stroke-width="1" fill="none"/><polygon points="3,15 7.5,10.500 7.5,15" fill="#8ba6d2" opacity=".8"/></svg>
<svg class="a" style="left:273.5px;top:850px" width="127.5" height="15" viewBox="0 0 127.5 15"><defs><linearGradient id="tg4" x1="0" y1="0" x2="0" y2="1"><stop offset="0" stop-color="#e3edfa"/><stop offset=".5" stop-color="#cfdef4"/><stop offset="1" stop-color="#bdd1ef"/></linearGradient></defs><polygon points="0,15 14,0 127.5,0 127.5,15" fill="url(#tg4)"/><path d="M0.5 15L14.5 0.500" stroke="#7f8fa9" stroke-width="1" fill="none"/><polygon points="3,15 7.5,10.500 7.5,15" fill="#8ba6d2" opacity=".8"/></svg>
<div class="a" style="left:399px;top:850px;width:1px;height:15px;background:#7f9bc9"></div>
<svg class="a" style="left:519px;top:850px" width="73" height="15" viewBox="0 0 73 15"><defs><linearGradient id="tg5" x1="0" y1="0" x2="0" y2="1"><stop offset="0" stop-color="#e3edfa"/><stop offset=".5" stop-color="#cfdef4"/><stop offset="1" stop-color="#bdd1ef"/></linearGradient></defs><polygon points="0,15 14,0 73,0 73,15" fill="url(#tg5)"/><path d="M0.5 15L14.5 0.500" stroke="#7f8fa9" stroke-width="1" fill="none"/><polygon points="3,15 7.5,10.500 7.5,15" fill="#8ba6d2" opacity=".8"/></svg>
<svg class="a" style="left:576px;top:850px" width="92" height="15" viewBox="0 0 92 15"><defs><linearGradient id="tg6" x1="0" y1="0" x2="0" y2="1"><stop offset="0" stop-color="#e3edfa"/><stop offset=".5" stop-color="#cfdef4"/><stop offset="1" stop-color="#bdd1ef"/></linearGradient></defs><polygon points="0,15 14,0 92,0 92,15" fill="url(#tg6)"/><path d="M0.5 15L14.5 0.500" stroke="#7f8fa9" stroke-width="1" fill="none"/><polygon points="3,15 7.5,10.500 7.5,15" fill="#8ba6d2" opacity=".8"/></svg>
<svg class="a" style="left:399px;top:849px" width="137" height="16" viewBox="0 0 137 16"><defs><linearGradient id="ta" x1="0" y1="0" x2="0" y2="1"><stop offset="0" stop-color="#ffffff"/><stop offset=".55" stop-color="#fbfcfe"/><stop offset="1" stop-color="#d6e3f5"/></linearGradient></defs><polygon points="0.5,0 136,0 120.500,16 3,15.5 0.5,13" fill="url(#ta)"/><path d="M0.5 0V13L3 15.5H120.500" fill="none" stroke="#7f8fa9" stroke-width="1"/></svg>
<div class="a" style="left:668px;top:850px;width:207px;height:15px;background:linear-gradient(#7a9bcc,#7b9bd1 50%,#84a3d6)"></div>
<div class="a" style="left:668px;top:851px;width:5px;height:13px;background:#eef3fb;border-radius:1px"></div><div class="a" style="left:670px;top:854px;width:1px;height:7px;background:#6f86ad"></div>
<div class="a" style="left:869px;top:851px;width:5px;height:13px;background:#fff"></div><div class="a" style="left:871px;top:854px;width:1px;height:7px;background:#6f86ad"></div>
<div class="a" style="left:679px;top:853px;width:0;height:0;border-top:4.500px solid transparent;border-bottom:4.500px solid transparent;border-right:5px solid #3b5580"></div>
<div class="a" style="left:857px;top:853px;width:0;height:0;border-top:4.500px solid transparent;border-bottom:4.500px solid transparent;border-left:5px solid #3b5580"></div>
<div class="a" style="left:691px;top:850px;width:56px;height:15px;border:1px solid #4f5f98;border-radius:2px;box-sizing:border-box;background:linear-gradient(#f2f5fa,#e1e8f3 30%,#c6d3e8 60%,#bccce4 80%,#e3ebf6);box-shadow:inset 1px 1px 0 rgba(255,255,255,.7)"></div>
<div class="a" style="left:715px;top:854px;width:1px;height:7px;background:#6f86ad"></div>
<div class="a" style="left:717px;top:854px;width:1px;height:7px;background:#6f86ad"></div>
<div class="a" style="left:719px;top:854px;width:1px;height:7px;background:#6f86ad"></div>
<div class="a" style="left:721px;top:854px;width:1px;height:7px;background:#6f86ad"></div>
<div class="a" style="left:0;top:865px;width:894px;height:1px;background:#6f8fc2"></div>
<div class="a" style="left:0;top:866px;width:894px;height:21px;background:linear-gradient(#e3eefc 0,#d3e3f9 2px,#c6dbf7 8px,#b1cdf3 10px,#b5cff3 15px,#cfe0f8 20px,#d3e3f9 21px)"></div>
<div class="a" style="left:626px;top:866px;width:268px;height:21px;border-radius:5px 0 0 0;background:linear-gradient(#a9c5ee 0,#9dbce9 8px,#83a6dc 10px,#7fa2d9 15px,#8cadde 21px)"></div>
<div class="a" style="left:72px;top:868px;width:1px;height:17px;background:#9bb5dc"></div><div class="a" style="left:73px;top:868px;width:1px;height:17px;background:#e9f2fd"></div>
<div class="a" style="left:630px;top:867px;width:58px;height:19px;border-radius:3px;background:rgba(215,230,250,.55);box-shadow:0 0 0 1px rgba(120,150,200,.5)"></div>
<div class="a" style="left:633px;top:867px;width:19px;height:18px;box-sizing:border-box;border:1px solid #d9b36a;background:linear-gradient(#fbe3a8,#f9cf75)"></div>
<svg class="a" style="left:636px;top:870px" width="14" height="12" viewBox="0 0 14 12"><rect x="0.5" y="0.5" width="13" height="11" fill="#fff" stroke="#8a6f4a" stroke-width="1"/><path d="M0.5 4h13M0.5 7.500h13M5 0.500v11M9.500 0.500v11" stroke="#b0783a" stroke-width="1"/></svg>
<svg class="a" style="left:654px;top:869px" width="14" height="14" viewBox="0 0 14 14"><rect x="0.5" y="0.5" width="13" height="13" fill="#c9ccd3" stroke="#6f7686" stroke-width="1"/><rect x="3.500" y="2.500" width="7" height="9" fill="#f7f8fb" stroke="#7d8494" stroke-width="1"/><path d="M5.500 5.500h3M5.500 8h3" stroke="#9aa0ad" stroke-width=".8"/></svg>
<svg class="a" style="left:673px;top:869px" width="14" height="14" viewBox="0 0 14 14"><rect x="0.5" y="0.5" width="13" height="13" fill="#c9ccd3" stroke="#6f7686" stroke-width="1"/><rect x="2" y="1.500" width="4" height="7" fill="#fff"/><rect x="7.500" y="1.500" width="4.500" height="7" fill="#fff"/><path d="M6.800 1v8M1 9h12" stroke="#5c6577" stroke-width="1"/></svg>
<svg class="a" style="left:735px;top:867px" width="18" height="18" viewBox="0 0 18 18"><circle cx="9" cy="9" r="7.600" fill="#eef2f9" stroke="#6f7f9c" stroke-width="1.100"/><circle cx="9" cy="9" r="6.200" fill="none" stroke="#fff" stroke-width=".9"/><path d="M5.500 9h7" stroke="#3c4356" stroke-width="1.800"/></svg>
<svg class="a" style="left:853px;top:867px" width="18" height="18" viewBox="0 0 18 18"><circle cx="9" cy="9" r="7.600" fill="#eef2f9" stroke="#6f7f9c" stroke-width="1.100"/><circle cx="9" cy="9" r="6.200" fill="none" stroke="#fff" stroke-width=".9"/><path d="M5 9h8M9 5v8" stroke="#3c4356" stroke-width="1.800"/></svg>
<div class="a" style="left:754px;top:875px;width:98px;height:1px;background:#5d7bb0"></div><div class="a" style="left:754px;top:876px;width:98px;height:1px;background:#e6effb"></div>
<svg class="a" style="left:797px;top:869px" width="11" height="14" viewBox="0 0 11 14"><path d="M1 0.500h9v8l-4.500 5l-4.500 -5z" fill="#e9eef7" stroke="#5c6b88" stroke-width="1"/><path d="M5.500 3v5" stroke="#8a94a8" stroke-width="1"/></svg>
<svg class="a" style="left:878px;top:873px" width="11" height="11" viewBox="0 0 11 11"><rect x="8" y="0" width="2" height="2" fill="#4f6fa8"/><rect x="9" y="1" width="1.500" height="1.500" fill="#e3edfb" opacity=".7"/><rect x="4" y="4" width="2" height="2" fill="#4f6fa8"/><rect x="5" y="5" width="1.500" height="1.500" fill="#e3edfb" opacity=".7"/><rect x="8" y="4" width="2" height="2" fill="#4f6fa8"/><rect x="9" y="5" width="1.500" height="1.500" fill="#e3edfb" opacity=".7"/><rect x="0" y="8" width="2" height="2" fill="#4f6fa8"/><rect x="1" y="9" width="1.500" height="1.500" fill="#e3edfb" opacity=".7"/><rect x="4" y="8" width="2" height="2" fill="#4f6fa8"/><rect x="5" y="9" width="1.500" height="1.500" fill="#e3edfb" opacity=".7"/><rect x="8" y="8" width="2" height="2" fill="#4f6fa8"/><rect x="9" y="9" width="1.500" height="1.500" fill="#e3edfb" opacity=".7"/></svg>
<div class="a" style="left:0;top:0;width:1px;height:888px;background:#2a467c"></div>
<div class="a" style="left:1px;top:0;width:3px;height:887px;background:linear-gradient(90deg,#8fb0e0,#b9d2f5 40%,#b7d0f3)"></div>
<div class="a" style="left:893px;top:0;width:1px;height:888px;background:#2a467c"></div>
<div class="a" style="left:890px;top:0;width:3px;height:887px;background:linear-gradient(90deg,#b7d0f3,#b9d2f5 60%,#8fb0e0)"></div>
<div class="a" style="left:0;top:887px;width:894px;height:1px;background:#2a467c"></div>
<svg class="a" style="left:0;top:882px" width="6" height="6" viewBox="0 0 6 6"><path d="M0 0v6h6a6 6 0 0 1 -6 -6z" fill="#fff"/><path d="M0.500 0a5.500 5.500 0 0 0 5.500 5.500" fill="none" stroke="#2a467c" stroke-width="1"/></svg>
<svg class="a" style="left:888px;top:882px" width="6" height="6" viewBox="0 0 6 6"><path d="M6 0v6h-6a6 6 0 0 0 6 -6z" fill="#fff"/><path d="M5.500 0a5.500 5.500 0 0 1 -5.500 5.500" fill="none" stroke="#2a467c" stroke-width="1"/></svg>
<span class="t" style="left:346px;top:-1.70px;font-size:13px;line-height:17px;color:#6d7c93;letter-spacing:-0.147px;">Stavba domu.xlsx</span>
<span class="t" style="left:454px;top:-1.70px;font-size:13px;line-height:17px;color:#6583b1;letter-spacing:0.039px;">- Microsoft Excel</span>
<span class="t" style="left:63.4px;top:26.32px;font-size:11.5px;line-height:15px;color:#223f78;letter-spacing:-0.234px;">Domov</span>
<span class="t" style="left:128.5px;top:26.32px;font-size:11.5px;line-height:15px;color:#223f78;letter-spacing:0.050px;">Vložiť</span>
<span class="t" style="left:187.6px;top:26.32px;font-size:11.5px;line-height:15px;color:#223f78;letter-spacing:-0.163px;">Rozloženie strany</span>
<span class="t" style="left:306px;top:26.32px;font-size:11.5px;line-height:15px;color:#223f78;letter-spacing:-0.439px;">Vzorce</span>
<span class="t" style="left:369.8px;top:26.32px;font-size:11.5px;line-height:15px;color:#223f78;letter-spacing:-0.316px;">Údaje</span>
<span class="t" style="left:429px;top:26.32px;font-size:11.5px;line-height:15px;color:#223f78;letter-spacing:-0.164px;">Posúdiť</span>
<span class="t" style="left:496.2px;top:26.32px;font-size:11.5px;line-height:15px;color:#223f78;letter-spacing:-0.025px;">Zobraziť</span>
<span class="t" style="left:569.3px;top:26.32px;font-size:11.5px;line-height:15px;color:#223f78;letter-spacing:-0.268px;">PDF Architect</span>
<span class="t" style="left:77.6px;top:52.02px;font-size:11.5px;line-height:15px;color:#223f78;letter-spacing:-0.058px;">Automatický súčet</span>
<span class="t" style="left:77.6px;top:74.02px;font-size:11.5px;line-height:15px;color:#223f78;letter-spacing:0.011px;">Naposledy použité</span>
<span class="t" style="left:77.6px;top:96.02px;font-size:11.5px;line-height:15px;color:#223f78;letter-spacing:-0.245px;">Finančné</span>
<span class="t" style="left:208.6px;top:52.02px;font-size:11.5px;line-height:15px;color:#223f78;letter-spacing:-0.290px;">Logické</span>
<span class="t" style="left:208.5px;top:74.02px;font-size:11.5px;line-height:15px;color:#223f78;letter-spacing:-0.631px;">Text</span>
<span class="t" style="left:208.5px;top:96.02px;font-size:11.5px;line-height:15px;color:#223f78;letter-spacing:-0.386px;">Dátum a čas</span>
<span class="t" style="left:17.5px;top:86.02px;font-size:11.5px;line-height:15px;color:#223f78;letter-spacing:-0.150px;">Vložiť</span>
<span class="t" style="left:13px;top:98.52px;font-size:11.5px;line-height:15px;color:#223f78;letter-spacing:0.260px;">funkciu</span>
<span class="t" style="left:326.5px;top:86.02px;font-size:11.5px;line-height:15px;color:#223f78;letter-spacing:-0.698px;">Správca</span>
<span class="t" style="left:333.6px;top:98.52px;font-size:11.5px;line-height:15px;color:#223f78;letter-spacing:-0.213px;">mien</span>
<span class="t" style="left:390.4px;top:52.02px;font-size:11.5px;line-height:15px;color:#223f78;letter-spacing:-0.007px;">Definovať názov</span>
<span class="t" style="left:390.4px;top:74.02px;font-size:11.5px;line-height:15px;color:#9ba8bb;letter-spacing:-0.157px;">Použiť vo vzorci</span>
<span class="t" style="left:390.4px;top:96.02px;font-size:11.5px;line-height:15px;color:#223f78;letter-spacing:-0.094px;">Vytvoriť z výberu</span>
<span class="t" style="left:521.4px;top:52.02px;font-size:11.5px;line-height:15px;color:#223f78;letter-spacing:-0.140px;">Predchodcovia</span>
<span class="t" style="left:521.4px;top:74.02px;font-size:11.5px;line-height:15px;color:#223f78;letter-spacing:-0.123px;">Následníci</span>
<span class="t" style="left:521.4px;top:96.02px;font-size:11.5px;line-height:15px;color:#223f78;letter-spacing:0.056px;">Odstrániť šípky</span>
<span class="t" style="left:669.8px;top:86.02px;font-size:11.5px;line-height:15px;color:#223f78;letter-spacing:0.000px;">Okno</span>
<span class="t" style="left:656.8px;top:98.52px;font-size:11.5px;line-height:15px;color:#223f78;letter-spacing:-0.154px;">sledovania</span>
<span class="t" style="left:729.4px;top:86.02px;font-size:11.5px;line-height:15px;color:#223f78;letter-spacing:0.224px;">Možnosti</span>
<span class="t" style="left:727px;top:98.52px;font-size:11.5px;line-height:15px;color:#223f78;letter-spacing:-0.056px;">výpočtov</span>
<span class="t" style="left:122.4px;top:116.22px;font-size:11.5px;line-height:15px;color:#4f74ae;letter-spacing:0.013px;">Knižnica funkcií</span>
<span class="t" style="left:361.3px;top:116.22px;font-size:11.5px;line-height:15px;color:#4f74ae;letter-spacing:-0.115px;">Definované názvy</span>
<span class="t" style="left:567.5px;top:116.22px;font-size:11.5px;line-height:15px;color:#4f74ae;letter-spacing:-0.172px;">Kontrola vzorca</span>
<span class="t" style="left:745.7px;top:116.22px;font-size:11.5px;line-height:15px;color:#4f74ae;letter-spacing:-0.127px;">Výpočet</span>
<span class="t" style="left:63.5px;top:140.84px;font-size:12px;line-height:16px;color:#000;letter-spacing:-0.180px;">B10</span>
<span class="t" style="left:90.4px;top:850.34px;font-size:12px;line-height:16px;color:#1e3f80;letter-spacing:-0.418px;">Naša sprcha</span>
<span class="t" style="left:176.2px;top:850.34px;font-size:12px;line-height:16px;color:#1e3f80;letter-spacing:-0.454px;">Solár</span>
<span class="t" style="left:223.3px;top:850.34px;font-size:12px;line-height:16px;color:#1e3f80;letter-spacing:-0.060px;">Strecha</span>
<span class="t" style="left:290.5px;top:850.34px;font-size:12px;line-height:16px;color:#1e3f80;letter-spacing:0.065px;">Latovanie strechy</span>
<span class="t" style="left:409.5px;top:850.34px;font-size:12px;line-height:16px;color:#1e3f80;letter-spacing:0.470px;font-weight:bold;">Zrážky a trativod</span>
<span class="t" style="left:532.4px;top:850.34px;font-size:12px;line-height:16px;color:#1e3f80;letter-spacing:-0.781px;">Žalúzia</span>
<span class="t" style="left:591.3px;top:850.34px;font-size:12px;line-height:16px;color:#1e3f80;letter-spacing:-0.209px;">Rôzne výpočty</span>
<span class="t" style="left:11.6px;top:868.52px;font-size:11.5px;line-height:15px;color:#223f78;letter-spacing:-0.341px;">Pripravený</span>
<span class="t" style="left:697px;top:868.52px;font-size:11.5px;line-height:15px;color:#223f78;letter-spacing:-0.652px;">100 %</span>
</body></html>
